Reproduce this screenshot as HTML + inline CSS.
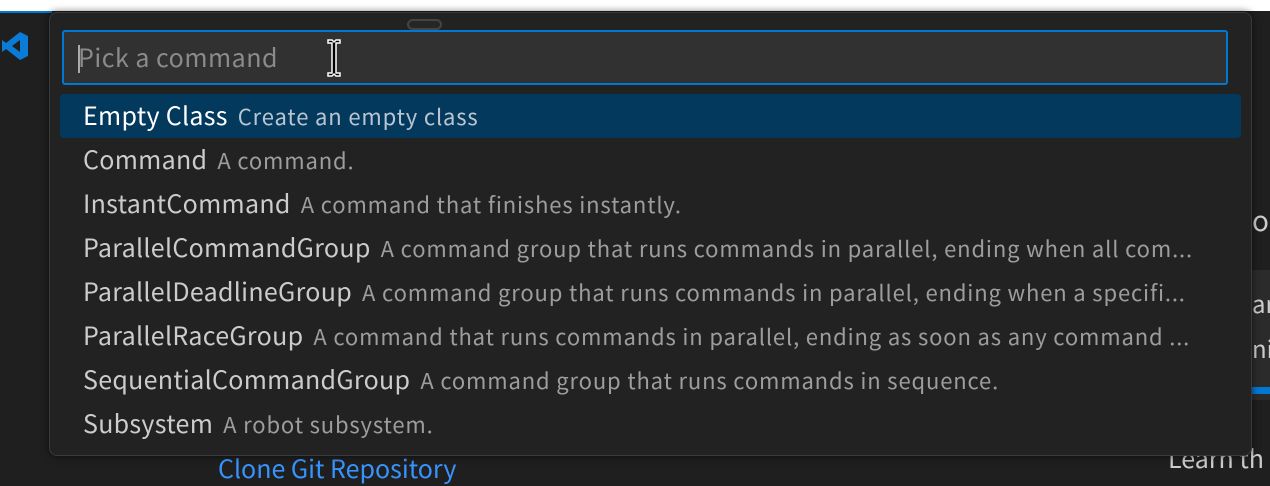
<!DOCTYPE html>
<html><head><meta charset="utf-8"><style>
*{margin:0;padding:0;box-sizing:border-box}
body{width:1270px;height:473px;overflow:hidden;background:#1f1f1f;font-family:"Noto Sans CJK JP","Liberation Sans",sans-serif;position:relative}
.top{position:absolute;left:0;top:0;width:1270px;height:11px;background:#fff}
.bl{position:absolute;left:0;top:11px;width:52px;height:2px;background:#0078d4}
.qp{position:absolute;left:49px;top:12px;width:1203px;height:444px;background:#222;border:1px solid #3a3a3a;border-radius:8px;box-shadow:0 0 8px rgba(0,0,0,.6)}
.grip{position:absolute;left:407px;top:19px;width:35px;height:11px;border:2px solid #444;border-radius:6px;background:#262626}
.inp{position:absolute;left:62px;top:30px;width:1166px;height:55px;background:#313131;border:2px solid #0078d4;border-radius:3px;color:#8b8b8b;font-size:25px;letter-spacing:0.5px;line-height:50px;padding:0 0 0 14px}
.inp::before{content:"";position:absolute;left:14px;top:13px;width:2px;height:28px;background:#aaa}
.row{position:absolute;left:60px;width:1181px;height:44px;font-size:25px;letter-spacing:0.3px;line-height:42px;color:#ccc;padding:0 0 0 23px;white-space:nowrap}
.row span{color:#9d9d9d;font-size:22px;letter-spacing:0.85px;margin-left:10px}
.sel{background:#04395e;border-radius:4px;color:#fff}
.sel span{color:#b9c6d2}
</style></head><body>
<div class="top"></div><div class="bl"></div>
<svg style="position:absolute;left:0;top:30px" width="30" height="32" viewBox="0 0 30 32"><path d="M20 2 L28 6 V26 L20 30 L6 19 L2 22 V10 L6 13 Z M20 10 L12 16 L20 22 Z" fill="#0a7bd6"/></svg>
<div style="position:absolute;left:1252px;top:270px;width:18px;height:130px;background:#2b2b2b"></div>
<div style="position:absolute;left:1252px;top:387px;width:18px;height:7px;background:#0078d4"></div>
<div style="position:absolute;left:1252px;top:200px;color:#ccc;font-size:28px">ou</div>
<div style="position:absolute;left:1252px;top:285px;color:#ccc;font-size:24px">ar</div>
<div style="position:absolute;left:1252px;top:330px;color:#ccc;font-size:24px">ni</div>
<div style="position:absolute;left:1168px;top:440px;color:#ccc;font-size:25px">Learn th</div>
<div style="position:absolute;left:218px;top:450px;color:#3794ff;font-size:25px">Clone Git Repository</div>
<div class="qp"></div>
<div class="grip"></div>
<div class="inp">Pick a command</div>
<svg style="position:absolute;left:325px;top:38px" width="18" height="40" viewBox="0 0 18 40"><path d="M3 2 H7 L9 4 L11 2 H15 V5 H11 V35 H15 V38 H11 L9 36 L7 38 H3 V35 H7 V5 H3 Z" fill="#000" stroke="#fff" stroke-width="1.5"/></svg>
<div class="row sel" style="top:94px">Empty Class<span>Create an empty class</span></div>
<div class="row" style="top:138px">Command<span>A command.</span></div>
<div class="row" style="top:182px">InstantCommand<span>A command that finishes instantly.</span></div>
<div class="row" style="top:226px">ParallelCommandGroup<span>A command group that runs commands in parallel, ending when all com...</span></div>
<div class="row" style="top:270px">ParallelDeadlineGroup<span>A command group that runs commands in parallel, ending when a specifi...</span></div>
<div class="row" style="top:314px">ParallelRaceGroup<span>A command that runs commands in parallel, ending as soon as any command ...</span></div>
<div class="row" style="top:358px">SequentialCommandGroup<span>A command group that runs commands in sequence.</span></div>
<div class="row" style="top:402px">Subsystem<span>A robot subsystem.</span></div>
</body></html>
